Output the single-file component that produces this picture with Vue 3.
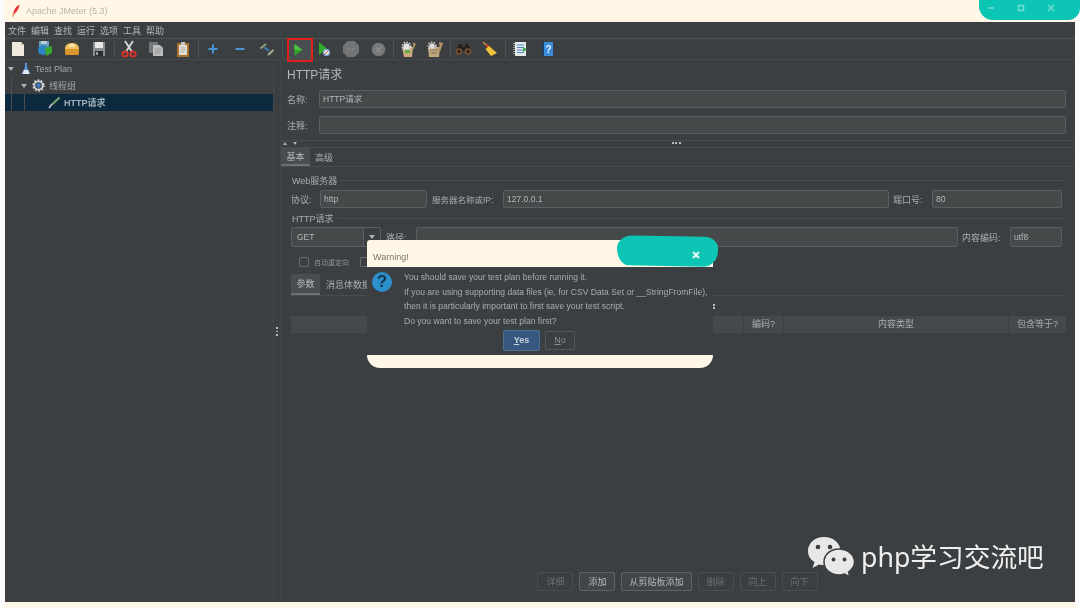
<template>
  <div class="page">
    <!-- barre de titre -->
    <div class="titlebar">
      <svg class="feather" width="10" height="14" viewBox="0 0 10 14">
        <path d="M8.5 0.5C5 2 3.5 5 2.6 8L2 12.5L3.6 9.5C6 8 8 4.5 8.5 0.5Z" fill="#e8343f" />
        <path d="M2.6 8L1.6 13.2" stroke="#e89a4a" stroke-width="1" />
      </svg>
      <span class="app-title">Apache JMeter (5.3)</span>
    </div>
    <div class="win-controls">
      <svg width="8" height="8" viewBox="0 0 8 8"><path d="M1 4H7" stroke="#6fdacf" stroke-width="1.6" /></svg>
      <svg width="8" height="8" viewBox="0 0 8 8"><rect x="1.5" y="1.5" width="5" height="5" fill="none" stroke="#6fdacf" stroke-width="1.6" /></svg>
      <svg width="8" height="8" viewBox="0 0 8 8"><path d="M1 1L7 7M7 1L1 7" stroke="#6fdacf" stroke-width="1.6" /></svg>
    </div>

    <div class="window">
      <div class="menubar">
        <span v-for="m in menus" :key="m">{{ m }}</span>
      </div>

      <div class="toolbar">
        <!-- nouveau -->
        <div class="tool"><svg width="16" height="16" viewBox="0 0 16 16"><path d="M2 1H11L14 4V15H2Z" fill="#efeadb" /><path d="M11 1L14 4H11Z" fill="#c9c3b0" /></svg></div>
        <!-- modèles -->
        <div class="tool"><svg width="18" height="18" viewBox="0 0 18 18"><path d="M3 1H13V14H3Z" fill="#6a9db8" /><path d="M5 1H11V4H5Z" fill="#b7cfdc" /><circle cx="7" cy="10" r="5" fill="#2f86c4" /><path d="M9 8L16 6V13L10 16Z" fill="#39a82f" /></svg></div>
        <!-- ouvrir -->
        <div class="tool"><svg width="16" height="16" viewBox="0 0 16 16"><path d="M1 8C1 4 4 2 8 2C12 2 15 4 15 8Z" fill="#efc35c" /><path d="M1 8H15V12C15 14 14 14 13 14H3C2 14 1 14 1 12Z" fill="#d9962a" /><path d="M5 3.500C6.500 2.700 9.500 2.700 11 3.500V6H5Z" fill="#f6e3ad" /></svg></div>
        <!-- enregistrer -->
        <div class="tool"><svg width="16" height="16" viewBox="0 0 16 16"><path d="M2 1H14V15H2Z" fill="#8b8f92" /><path d="M4 1H12V7H4Z" fill="#e8e8e8" /><path d="M4 10H12V15H4Z" fill="#2b2d2f" /><rect x="5" y="11" width="2" height="3" fill="#9a9a9a" /></svg></div>
        <i class="sep"></i>
        <!-- couper -->
        <div class="tool"><svg width="16" height="18" viewBox="0 0 16 18"><path d="M4 1L10.500 11M12 1L5.500 11" stroke="#d9d9d9" stroke-width="1.800" /><circle cx="4" cy="14" r="2.600" fill="none" stroke="#d6342c" stroke-width="2" /><circle cx="12" cy="14" r="2.600" fill="none" stroke="#d6342c" stroke-width="2" /></svg></div>
        <!-- copier -->
        <div class="tool"><svg width="16" height="16" viewBox="0 0 16 16"><path d="M1 1H10V12H1Z" fill="#74777a" /><path d="M5 4H12L15 7V15H5Z" fill="#b9bbbd" /><path d="M7 8H13M7 10H13M7 12H12" stroke="#8d8f91" stroke-width=".8" /></svg></div>
        <!-- coller -->
        <div class="tool"><svg width="16" height="17" viewBox="0 0 16 17"><path d="M2 2H14V16H2Z" fill="#a9742f" /><path d="M4 4H12V14H4Z" fill="#e0ded6" /><path d="M6 1H10V4H6Z" fill="#c9c9c9" /><path d="M5.500 7H10.500M5.500 9H10.500M5.500 11H9" stroke="#a5a39b" stroke-width=".8" /></svg></div>
        <i class="sep"></i>
        <div class="tool"><svg width="14" height="14" viewBox="0 0 14 14"><path d="M7 2.500V11.500M2.500 7H11.500" stroke="#4b93d6" stroke-width="2" /></svg></div>
        <div class="tool"><svg width="14" height="14" viewBox="0 0 14 14"><path d="M2.500 7H11.500" stroke="#4b93d6" stroke-width="2" /></svg></div>
        <!-- basculer -->
        <div class="tool"><svg width="16" height="16" viewBox="0 0 16 16"><path d="M1.500 7.500L7 3" stroke="#8ca27a" stroke-width="2" /><path d="M5.500 6.500L10 10" stroke="#3f7fb8" stroke-width="2" /><path d="M9 14L14.500 9" stroke="#a9b48f" stroke-width="2" /></svg></div>
        <i class="sep"></i>
        <!-- démarrer, encadré en rouge -->
        <div class="tool run-box"><svg width="12" height="14" viewBox="0 0 12 14"><path d="M2.500 1L10.500 7L2.500 13Z" fill="#2fa52a" /><path d="M2.500 1L10.500 7H2.500Z" fill="#4fc245" /></svg></div>
        <div class="tool"><svg width="14" height="16" viewBox="0 0 14 16"><path d="M2 1L10.500 8L2 14Z" fill="#33a82c" /><circle cx="9.500" cy="11.500" r="3.400" fill="#eee" /><path d="M7.500 13.500L11.500 9.500" stroke="#d8402f" stroke-width="1" /><circle cx="9.500" cy="11.500" r="3" fill="none" stroke="#3a7bc8" stroke-width=".9" /></svg></div>
        <div class="tool"><svg width="18" height="18" viewBox="0 0 18 18"><path d="M5.500 1H12.500L17 5.500V12.500L12.500 17H5.500L1 12.500V5.500Z" fill="#727476" /><path d="M4.500 9H13.500" stroke="#808284" stroke-width="2.400" stroke-dasharray="2 .8" /></svg></div>
        <div class="tool"><svg width="15" height="15" viewBox="0 0 15 15"><circle cx="7.500" cy="7.500" r="6.800" fill="#78797b" /><path d="M5 5L10 10M10 5L5 10" stroke="#8b8d8f" stroke-width="1.600" /></svg></div>
        <i class="sep"></i>
        <!-- effacer -->
        <div class="tool"><svg width="17" height="17" viewBox="0 0 17 17"><path d="M2 6H13L12 16H4Z" fill="#c8a97e" /><circle cx="6.500" cy="5.500" r="3.200" fill="#e2e2e2" /><circle cx="6.500" cy="5.500" r="4.300" fill="none" stroke="#e2e2e2" stroke-width="1.300" stroke-dasharray="1.500 1.300" /><path d="M5 9H10V12H5Z" fill="#5fae3c" /><path d="M13 1L16 3L13 9Z" fill="#a88a60" /></svg></div>
        <div class="tool"><svg width="17" height="17" viewBox="0 0 17 17"><path d="M1 6H13L12 16H2Z" fill="#c2a67e" /><circle cx="5" cy="5" r="2.800" fill="#ddd" /><circle cx="5" cy="5" r="3.900" fill="none" stroke="#ddd" stroke-width="1.300" stroke-dasharray="1.500 1.300" /><path d="M12 1L16 2L13 11Z" fill="#b3936b" /><path d="M3 9H11M4 12H10" stroke="#8a6f4e" stroke-width="1" /></svg></div>
        <i class="sep tight"></i>
        <!-- jumelles -->
        <div class="tool"><svg width="17" height="11" viewBox="0 0 17 11"><path d="M4 0H7V3H10V0H13L16.500 7H0.500Z" fill="#26211d" /><circle cx="4" cy="7.500" r="3.300" fill="#7a5230" /><circle cx="13" cy="7.500" r="3.300" fill="#7a5230" /><circle cx="4" cy="7.500" r="1.600" fill="#1f1a16" /><circle cx="13" cy="7.500" r="1.600" fill="#1f1a16" /></svg></div>
        <!-- balai -->
        <div class="tool"><svg width="16" height="16" viewBox="0 0 16 16"><path d="M1 1L6 5.500" stroke="#d08a38" stroke-width="1.600" /><path d="M4.500 4.500L8 7" stroke="#d8352a" stroke-width="2.400" /><path d="M7 5L15 12L9 15L3.500 8Z" fill="#eec53a" /></svg></div>
        <i class="sep"></i>
        <!-- liste -->
        <div class="tool"><svg width="15" height="16" viewBox="0 0 15 16"><path d="M2 1H13V15H2Z" fill="#e6e8ea" /><path d="M4 4H11M4 6.500H11M4 9H11M4 11.500H11" stroke="#4a88c8" stroke-width="1" /><path d="M1 2V14" stroke="#9aa0a5" stroke-width="2" stroke-dasharray="1 1" /><path d="M10 6L14 8.500L10 11Z" fill="#3fa446" /></svg></div>
        <!-- aide -->
        <div class="tool"><svg width="13" height="16" viewBox="0 0 13 16"><path d="M1 1H12V15H1Z" fill="#3b8ddb" /><path d="M1 1H3V15H1Z" fill="#1d3f66" /><text x="7.500" y="12" class="help-mark">?</text></svg></div>
      </div>

      <div class="main">
        <!-- arbre -->
        <div class="tree">
          <i class="guide guide-a"></i>
          <i class="guide guide-b"></i>
          <div class="tree-row row-0">
            <i class="caret"></i>
            <svg width="10" height="13" viewBox="0 0 10 13"><path d="M4 1H6V5L9.500 12H0.500L4 5Z" fill="#5b93d8" /><path d="M3 8H7L8.500 12H1.500Z" fill="#e3e8ee" /></svg>
            <span>Test Plan</span>
          </div>
          <div class="tree-row row-1">
            <i class="caret"></i>
            <svg width="13" height="13" viewBox="0 0 13 13"><circle cx="6.500" cy="6.500" r="4.200" fill="none" stroke="#cdd2d6" stroke-width="1.800" /><circle cx="6.500" cy="6.500" r="5.400" fill="none" stroke="#cdd2d6" stroke-width="1.600" stroke-dasharray="1.700 1.700" /><circle cx="6.500" cy="6.500" r="2.200" fill="#3f7fc4" /></svg>
            <span>线程组</span>
          </div>
          <div class="tree-row row-2">
            <svg width="13" height="13" viewBox="0 0 13 13"><path d="M1 12L4 8" stroke="#d5d5d5" stroke-width="1.400" /><path d="M4 8.500L11.500 1.500" stroke="#7fa66a" stroke-width="2" /></svg>
            <span class="selected-text">HTTP请求</span>
          </div>
        </div>

        <div class="divider"><i class="grip"></i></div>

        <!-- panneau de droite -->
        <div class="panel">
          <div class="panel-title">HTTP请求</div>
          <div class="name-row">
            <label>名称:</label>
            <div class="input grow">HTTP请求</div>
          </div>
          <div class="name-row second">
            <label>注释:</label>
            <div class="input grow"></div>
          </div>

          <div class="split">
            <i class="mini up"></i>
            <i class="mini down"></i>
            <i class="split-dots"></i>
          </div>

          <div class="tabs top-tabs">
            <span class="tab active">基本</span>
            <span class="tab">高级</span>
          </div>

          <div class="content">
            <div class="legend first"><span>Web服务器</span></div>
            <div class="field-row server">
              <label class="l-proto">协议:</label>
              <div class="input proto">http</div>
              <label class="l-host">服务器名称或IP:</label>
              <div class="input grow">127.0.0.1</div>
              <label class="l-port">端口号:</label>
              <div class="input port">80</div>
            </div>

            <div class="legend"><span>HTTP请求</span></div>
            <div class="field-row request">
              <div class="combo">
                <span class="combo-value">GET</span>
                <span class="combo-arrow"><i class="caret"></i></span>
              </div>
              <label class="l-path">路径:</label>
              <div class="input grow"></div>
              <label class="l-enc">内容编码:</label>
              <div class="input enc">utf8</div>
            </div>

            <div class="checks">
              <i class="box"></i>
              <span>自动重定向</span>
              <i class="box"></i>
            </div>

            <div class="tabs lower-tabs">
              <span class="tab active">参数</span>
              <span class="tab">消息体数据</span>
            </div>

            <div class="params">
              <i class="params-dots"></i>
              <div class="thead">
                <span class="col-main"></span>
                <span class="col-enc">编码?</span>
                <span class="col-type">内容类型</span>
                <span class="col-eq">包含等于?</span>
              </div>
            </div>

            <div class="actions">
              <button v-for="b in buttons" :key="b.label" :class="{ off: b.off }">{{ b.label }}</button>
            </div>
          </div>
        </div>
      </div>
    </div>
    <div class="bottom-strip"></div>

    <!-- boite de dialogue -->
    <div class="dialog">
      <div class="dialog-head">Warning!</div>
      <i class="teal-blob"></i>
      <svg class="dialog-close" width="8" height="8" viewBox="0 0 8 8"><path d="M1 1L7 7M7 1L1 7" stroke="#eafaf8" stroke-width="2" /></svg>
      <div class="dialog-body">
        <div class="q-icon">?</div>
        <div class="dialog-main">
          <p v-for="line in warning" :key="line">{{ line }}</p>
          <div class="dialog-buttons">
            <button class="yes"><u>Y</u>es</button>
            <button class="no"><u>N</u>o</button>
          </div>
        </div>
      </div>
      <div class="dialog-foot"></div>
    </div>

    <!-- filigrane -->
    <div class="watermark">
      <svg width="48" height="42" viewBox="0 0 48 42">
        <path d="M17 1C8 1 1 7 1 15C1 20 3.500 23.500 7.500 26L5.500 32L12 28.500C14 29 15.500 29.300 17.500 29.300C26 29.300 33.500 23 33.500 15C33.500 7 26 1 17 1Z" fill="#e8e8e8" />
        <circle cx="11" cy="11" r="2.300" fill="#3c3f41" />
        <circle cx="23" cy="11" r="2.300" fill="#3c3f41" />
        <path d="M32 13C23 13 17 19 17 26C17 33 23 39 32 39C34 39 35.500 38.700 37.500 38L43 41L41.500 36C45 33.500 47.500 30 47.500 26C47.500 19 41 13 32 13Z" fill="#e8e8e8" stroke="#3c3f41" stroke-width="1.500" />
        <circle cx="26.500" cy="23.500" r="1.900" fill="#3c3f41" />
        <circle cx="37.500" cy="23.500" r="1.900" fill="#3c3f41" />
      </svg>
      <span>php学习交流吧</span>
    </div>
  </div>
</template>

<script setup>
const menus = ['文件', '编辑', '查找', '运行', '选项', '工具', '帮助']

const buttons = [
  { label: '详细', off: true },
  { label: '添加', off: false },
  { label: '从剪贴板添加', off: false },
  { label: '删除', off: true },
  { label: '向上', off: true },
  { label: '向下', off: true },
]

const warning = [
  'You should save your test plan before running it.',
  'If you are using supporting data files (ie, for CSV Data Set or __StringFromFile),',
  'then it is particularly important to first save your test script.',
  'Do you want to save your test plan first?',
]
</script>

<style>
html,
body {
  margin: 0;
  background: #fbfbfb;
}
</style>

<style scoped>
.page {
  position: relative;
  width: 1080px;
  height: 608px;
  overflow: hidden;
  font-family: "Liberation Sans", "Noto Sans CJK SC", sans-serif;
  font-size: 9px;
  color: #a9adaf;
}

/* Barre de titre */
.titlebar {
  height: 22px;
  margin-left: 5px;
  width: 1070px;
  background: #fff6e6;
  display: flex;
  align-items: center;
  gap: 5px;
  padding-left: 6px;
  box-sizing: border-box;
  padding-bottom: 1px;
}
.app-title {
  color: #bdb6a8;
  font-size: 9px;
  filter: blur(0.3px);
}
.win-controls {
  position: absolute;
  left: 979px;
  top: 0;
  width: 101px;
  height: 20px;
  background: #0cc5b5;
  border-radius: 0 0 12px 14px;
  display: flex;
  align-items: center;
  gap: 22px;
  padding-left: 8px;
  box-sizing: border-box;
  padding-bottom: 4px;
}

/* Fenetre */
.window {
  margin-left: 5px;
  width: 1070px;
  height: 580px;
  background: #3c3f41;
  display: flex;
  flex-direction: column;
  filter: blur(0.45px);
}
.bottom-strip {
  height: 6px;
  background: #fff7e8;
  margin-left: 5px;
  width: 1070px;
}
.menubar {
  height: 16px;
  display: flex;
  align-items: center;
  gap: 5px;
  padding-left: 3px;
  border-bottom: 1px solid #505355;
  font-size: 9px;
  color: #b4b7b9;
}
.toolbar {
  height: 20px;
  display: flex;
  align-items: center;
  gap: 3px;
  padding-left: 1px;
  border-bottom: 1px solid #464a4c;
}
.tool {
  width: 24px;
  height: 20px;
  flex: none;
  display: flex;
  align-items: center;
  justify-content: center;
}
.sep {
  width: 1px;
  height: 17px;
  margin-right: -1px;
  background: #505355;
}
.sep.tight {
  margin-right: -3px;
}
.run-box {
  box-sizing: border-box;
  width: 26px;
  height: 24px;
  margin-left: 2px;
  margin-right: -4px;
  padding-right: 4px;
  background: #4a4d4f;
  outline: 2px solid #e0201c;
  outline-offset: -2px;
  position: relative;
  z-index: 1;
  margin-top: 1px;
}
.help-mark {
  font-size: 10px;
  font-weight: bold;
  fill: #e4effa;
  text-anchor: middle;
}

.main {
  flex: 1;
  display: flex;
  min-height: 0;
}

/* Arbre */
.tree {
  position: relative;
  width: 268px;
  flex: none;
  font-size: 9px;
  color: #a3a7a9;
}
.tree-row {
  height: 17px;
  display: flex;
  align-items: center;
  gap: 4px;
  box-sizing: border-box;
}
.row-0 {
  padding-left: 3px;
}
.row-0 .caret {
  margin-right: 3px;
}
.row-1 {
  padding-left: 16px;
}
.row-2 {
  padding-left: 43px;
  gap: 3px;
  background: #0d293e;
}
.selected-text {
  font-weight: bold;
  color: #9fb0bb;
}
.caret {
  width: 0;
  height: 0;
  border-left: 3.500px solid transparent;
  border-right: 3.500px solid transparent;
  border-top: 4px solid #b0b3b5;
  margin-right: 1px;
}
.guide {
  position: absolute;
  width: 1px;
  background: #4b4e50;
}
.guide-a {
  left: 6px;
  top: 17px;
  height: 34px;
}
.guide-b {
  left: 19px;
  top: 34px;
  height: 17px;
}

.divider {
  position: relative;
  width: 7px;
  flex: none;
  border-left: 1px solid #434648;
  box-sizing: border-box;
}
.grip {
  position: absolute;
  left: 1.500px;
  top: 267px;
  width: 2px;
  height: 9px;
  background: repeating-linear-gradient(#b9bbbd 0 2px, transparent 2px 3.500px);
}

/* Panneau de droite */
.panel {
  flex: 1;
  min-width: 0;
  display: flex;
  flex-direction: column;
  border-left: 1px solid #424547;
  box-sizing: border-box;
}
.panel-title {
  height: 30px;
  line-height: 30px;
  padding-left: 6px;
  font-size: 12px;
  color: #b4b7b9;
}
.name-row {
  height: 18px;
  display: flex;
  align-items: center;
  padding-left: 6px;
  padding-right: 9px;
  gap: 9px;
}
.name-row.second {
  margin-top: 8px;
}
.name-row label {
  width: 23px;
  flex: none;
}
.input {
  box-sizing: border-box;
  height: 18px;
  line-height: 16px;
  padding-left: 3px;
  background: #45494a;
  border: 1px solid #5a5e60;
  border-radius: 2px;
  font-size: 8.500px;
  color: #b4b7b9;
}
.grow {
  flex: 1;
  min-width: 0;
}

.split {
  position: relative;
  height: 8px;
  margin-top: 6px;
  border-top: 1px solid #484b4d;
  border-bottom: 1px solid #484b4d;
  box-sizing: border-box;
}
.mini {
  position: absolute;
  top: 1px;
  width: 0;
  height: 0;
  border-left: 2.500px solid transparent;
  border-right: 2.500px solid transparent;
}
.mini.up {
  left: 2px;
  border-bottom: 3px solid #b0b3b5;
}
.mini.down {
  left: 12px;
  border-top: 3px solid #b0b3b5;
}
.split-dots {
  position: absolute;
  left: 391px;
  top: 1px;
  width: 9px;
  height: 2px;
  background: repeating-linear-gradient(90deg, #b9bbbd 0 2px, transparent 2px 3.500px);
}

.tabs {
  display: flex;
  align-items: stretch;
}
.top-tabs {
  height: 18px;
  border-bottom: 1px solid #484b4d;
}
.tab {
  display: flex;
  align-items: center;
  padding: 0 5px;
}
.tab.active {
  width: 29px;
  justify-content: center;
  padding: 0;
  background: #4a4d4f;
  border-bottom: 2px solid #6d7173;
  color: #b8bbbd;
  box-sizing: border-box;
}

.content {
  flex: 1;
  display: flex;
  flex-direction: column;
  padding: 0 5px 11px 10px;
  min-height: 0;
}
.legend {
  height: 16px;
  margin-top: 2px;
  margin-right: 4px;
  display: flex;
  align-items: center;
  gap: 4px;
  padding-left: 1px;
  font-size: 9px;
}
.legend.first {
  margin-top: 5px;
}
.legend::after {
  content: "";
  flex: 1;
  height: 1px;
  background: #4b4e50;
}
.field-row {
  display: flex;
  align-items: center;
}
.server {
  height: 18px;
  margin-top: 2px;
  padding-right: 8px;
}
.l-proto {
  width: 29px;
  flex: none;
}
.proto {
  width: 107px;
  flex: none;
}
.l-host {
  width: 71px;
  flex: none;
  padding-left: 5px;
  white-space: nowrap;
  font-size: 8.500px;
}
.l-port {
  width: 43px;
  flex: none;
  padding-left: 4px;
  box-sizing: border-box;
  white-space: nowrap;
}
.port {
  width: 130px;
  flex: none;
}
.request {
  height: 20px;
  margin-top: 1px;
  padding-right: 8px;
}
.request .input {
  height: 20px;
  line-height: 18px;
}
.combo {
  width: 90px;
  height: 20px;
  flex: none;
  display: flex;
  box-sizing: border-box;
  background: #45494a;
  border: 1px solid #5a5e60;
  border-radius: 2px;
}
.combo-value {
  flex: 1;
  padding-left: 5px;
  line-height: 18px;
  font-size: 8.500px;
  color: #b4b7b9;
}
.combo-arrow {
  width: 16px;
  display: flex;
  align-items: center;
  justify-content: center;
  border-left: 1px solid #5a5e60;
  background: #3c3f41;
}
.l-path {
  width: 35px;
  flex: none;
  padding-left: 5px;
  box-sizing: border-box;
}
.l-enc {
  width: 52px;
  flex: none;
  padding-left: 4px;
  box-sizing: border-box;
  white-space: nowrap;
}
.enc {
  width: 52px;
  flex: none;
}
.checks {
  height: 14px;
  margin-top: 8px;
  padding-left: 8px;
  display: flex;
  align-items: center;
  gap: 5px;
  font-size: 7px;
  color: #8f9395;
}
.box {
  width: 8px;
  height: 8px;
  border: 1px solid #66696b;
  border-radius: 1px;
}
.checks .box:last-child {
  margin-left: 6px;
}
.lower-tabs {
  height: 21px;
  margin-top: 5px;
  margin-right: 5px;
  border-bottom: 1px solid #484b4d;
}
.lower-tabs .tab.active {
  margin-right: 1px;
}
.params {
  position: relative;
  margin-top: 20px;
}
.params-dots {
  position: absolute;
  left: 422px;
  top: -12px;
  width: 2px;
  height: 5px;
  background: repeating-linear-gradient(#b9bbbd 0 2px, transparent 2px 3px);
}
.thead {
  height: 17px;
  display: flex;
  gap: 1px;
  text-align: center;
  line-height: 17px;
  width: 775px;
}
.thead span {
  background: #46494b;
  flex: none;
  box-sizing: border-box;
}
.col-main {
  width: 452px;
}
.col-enc {
  width: 39px;
}
.col-type {
  width: 224px;
}
.col-eq {
  width: 57px;
}

.actions {
  margin-top: auto;
  display: flex;
  gap: 6px;
  justify-content: center;
  padding-right: 6px;
}
.actions button {
  height: 19px;
  padding: 0 7px;
  min-width: 36px;
  box-sizing: border-box;
  background: #434648;
  border: 1px solid #5f6365;
  border-radius: 2px;
  color: #b4b7b9;
  font: 9px "Liberation Sans", "Noto Sans CJK SC", sans-serif;
}
.actions button.off {
  background: #3c3f41;
  border-color: #4b4e50;
  color: #6b6e70;
}

/* Boite de dialogue */
.dialog {
  position: absolute;
  left: 367px;
  top: 240px;
  width: 346px;
  height: 128px;
  display: flex;
  flex-direction: column;
  filter: blur(0.35px);
}
.dialog-head {
  height: 27px;
  box-sizing: border-box;
  padding: 12px 0 0 6px;
  background: #fff6e6;
  border-radius: 3px 3px 0 0;
  color: #7b766c;
  font-size: 9px;
}
.teal-blob {
  position: absolute;
  left: 250px;
  top: -4px;
  width: 101px;
  height: 30px;
  background: #0cc5b5;
  border-radius: 15px 14px 14px 12px / 13px 12px 16px 17px;
  transform: rotate(1deg);
}
.dialog-close {
  position: absolute;
  left: 325px;
  top: 11px;
}
.dialog-body {
  height: 88px;
  background: #3c3f41;
  display: flex;
}
.q-icon {
  width: 20px;
  height: 20px;
  margin: 5px 0 0 5px;
  border-radius: 50%;
  background: #2d90cc;
  color: #16354a;
  font: bold 17px/20px "Liberation Sans", sans-serif;
  text-align: center;
  flex: none;
}
.dialog-main {
  margin-left: 12px;
  padding-top: 3px;
  flex: 1;
}
.dialog-main p {
  margin: 0;
  height: 14.700px;
  line-height: 14.700px;
  font-size: 8.500px;
  letter-spacing: 0.03px;
  white-space: nowrap;
  color: #a9adaf;
}
.dialog-buttons {
  display: flex;
  align-items: center;
  gap: 5px;
  margin-left: 99px;
  margin-top: 1px;
}
.dialog-buttons button {
  padding: 0;
  box-sizing: border-box;
  font: 9px "Liberation Sans", sans-serif;
  border-radius: 2px;
}
.yes {
  width: 37px;
  height: 21px;
  background: #365880;
  border: 1px solid #4c708c;
  color: #c9d4de;
  font-weight: bold !important;
}
.no {
  width: 30px;
  height: 19px;
  background: #3c3f41;
  border: 1px solid #54585a;
  color: #8b8e90;
}
.dialog-foot {
  flex: 1;
  background: #fff6e6;
  border-radius: 0 0 14px 14px;
}

/* Filigrane */
.watermark {
  position: absolute;
  left: 807px;
  top: 536px;
  display: flex;
  align-items: center;
  gap: 6px;
  color: #f0f0f0;
  font-family: "Noto Sans", "Noto Sans CJK SC", sans-serif;
  font-size: 26.700px;
  line-height: 42px;
  white-space: nowrap;
  filter: blur(0.3px);
}
</style>
